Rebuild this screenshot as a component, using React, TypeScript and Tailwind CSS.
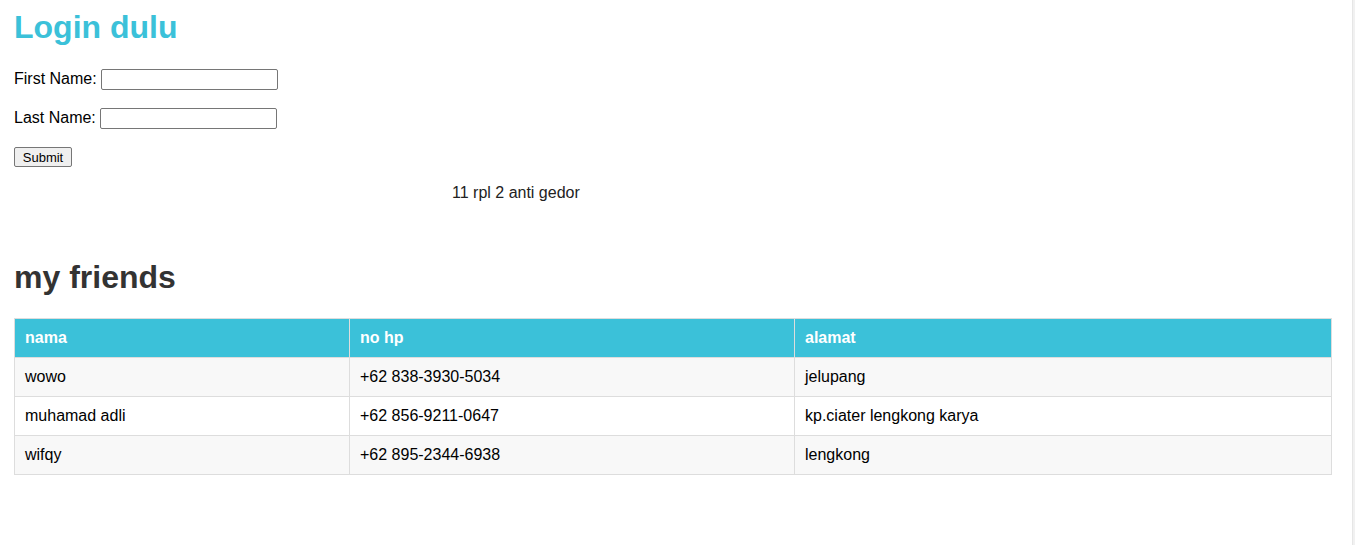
const friends = [
  { nama: "wowo", hp: "+62 838-3930-5034", alamat: "jelupang" },
  { nama: "muhamad adli", hp: "+62 856-9211-0647", alamat: "kp.ciater lengkong karya" },
  { nama: "wifqy", hp: "+62 895-2344-6938", alamat: "lengkong" },
];

export default function App() {
  return (
    <div className="flex h-[545px] w-full overflow-hidden bg-white font-['Liberation_Sans',Arial,sans-serif] text-black">
      <div className="flex-1 pl-[14px]">
        {/* Login form */}
        <h1 className="mt-[9px] text-[32px] font-bold leading-[37px] text-[#3bc1d9]">Login dulu</h1>

        <form className="mt-[23px]" onSubmit={(e) => e.preventDefault()}>
          <div className="flex h-[21px] items-center gap-[4px] text-[16px] leading-[18px]">
            <label className="mb-[2px]">First Name:</label>
            <input className="h-[21px] w-[177px] rounded-[2px] border border-[#767676] bg-white px-[2px] text-[13px]" />
          </div>
          <div className="mt-[18px] flex h-[21px] items-center gap-[4px] text-[16px] leading-[18px]">
            <label className="mb-[2px]">Last Name:</label>
            <input className="h-[21px] w-[177px] rounded-[2px] border border-[#767676] bg-white px-[2px] text-[13px]" />
          </div>
          <button
            type="submit"
            className="mt-[18px] block h-[20px] w-[58px] rounded-[2px] border border-[#767676] bg-[#efefef] pt-[1px] text-[13px] leading-[16px] text-black"
          >
            Submit
          </button>
        </form>

        <p className="mt-[17px] pl-[438px] text-[16px] leading-[18px] text-[#222]">11 rpl 2 anti gedor</p>

        {/* Friends table */}
        <h2 className="mt-[57px] text-[32px] font-bold leading-[37px] text-[#333]">my friends</h2>

        <table className="mt-[22px] w-[1318px] table-fixed border-collapse text-[16px] leading-[18px]">
          <thead>
            <tr className="h-[39px] bg-[#3bc1d9] text-left text-white">
              <th className="w-[335px] border border-[#ddd] px-[10px] font-bold">nama</th>
              <th className="w-[445px] border border-[#ddd] px-[10px] font-bold">no hp</th>
              <th className="border border-[#ddd] px-[10px] font-bold">alamat</th>
            </tr>
          </thead>
          <tbody>
            {friends.map((f, i) => (
              <tr key={f.nama} className={i % 2 === 0 ? "h-[39px] bg-[#f8f8f8]" : "h-[39px] bg-white"}>
                <td className="border border-[#ddd] px-[10px]">{f.nama}</td>
                <td className="border border-[#ddd] px-[10px]">{f.hp}</td>
                <td className="border border-[#ddd] px-[10px]">{f.alamat}</td>
              </tr>
            ))}
          </tbody>
        </table>
      </div>
      <div className="w-[3px] border-l border-[#e6e6e6] bg-[#f1f1f1]" />
    </div>
  );
}
